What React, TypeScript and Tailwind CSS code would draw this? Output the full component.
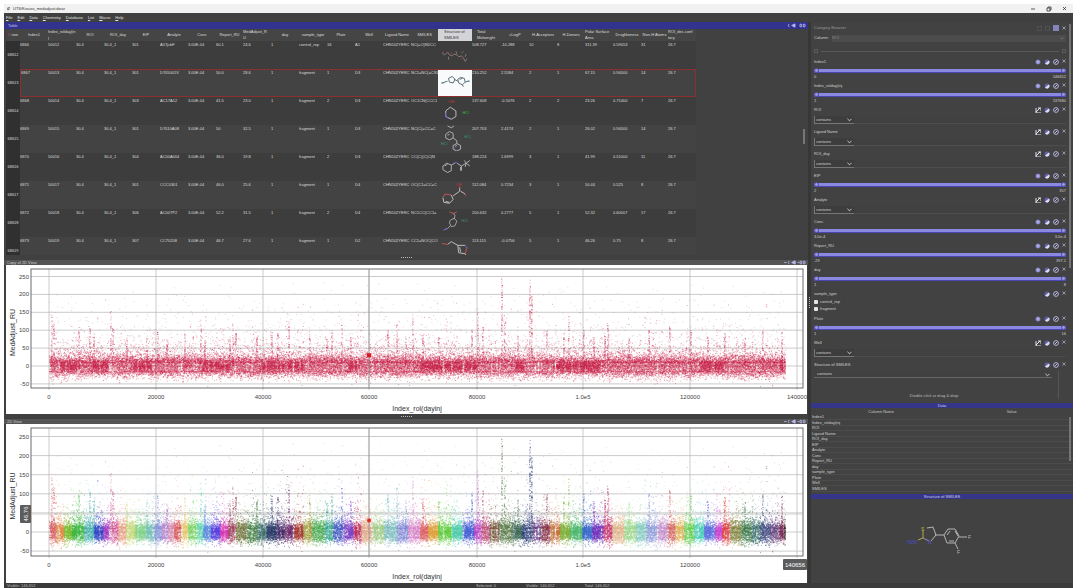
import type { ReactNode } from "react";

type Column = { label: string; width: string; wrap?: string; active?: boolean };

const columns: Column[] = [
  { label: "Index1", width: "w-[28px]" },
  { label: "Index_rolday(inj", width: "w-[28px]", wrap: "break-all" },
  { label: "ROI", width: "w-[28px]" },
  { label: "ROI_day", width: "w-[28px]" },
  { label: "EIP", width: "w-[28px]" },
  { label: "Analyte", width: "w-[28px]" },
  { label: "Conc", width: "w-[28px]" },
  { label: "Report_RU", width: "w-[27px]" },
  { label: "MedAdjust_RU", width: "w-[28px]", wrap: "break-all pr-[3px]" },
  { label: "day", width: "w-[28px]" },
  { label: "sample_type", width: "w-[28px]" },
  { label: "Plate", width: "w-[28px]" },
  { label: "Well", width: "w-[28px]" },
  { label: "Ligand Name", width: "w-[28px]" },
  { label: "SMILES", width: "w-[27px]" },
  { label: "Structure of SMILES", width: "w-[34px]", wrap: "px-[6px]", active: true },
  { label: "Total Molweight", width: "w-[29px]", wrap: "pl-[5px] pr-[2px]" },
  { label: "cLogP", width: "w-[28px]" },
  { label: "H-Acceptors", width: "w-[28px]" },
  { label: "H-Donors", width: "w-[28px]" },
  { label: "Polar Surface Area", width: "w-[28px]", wrap: "pr-px" },
  { label: "Druglikeness", width: "w-[28px]" },
  { label: "Non-H Atoms", width: "w-[27px]" },
  { label: "ROI_dec.conf tory", width: "w-[28px]", wrap: "pr-px" },
];

const rows: string[][] = [
  ["6866", "50012", "30.4", "30.4_1", "301", "A57jcbF", "3.00E-04", "60.1", "24.6", "1", "control_rep", "16", "A1", "CHN102YERC", "NC(=O)N1CC", "508.727", "-10.288", "10", "8", "311.39", "0.59053", "31", "26.7"],
  ["6867", "50013", "30.4", "30.4_1", "301", "D705001V", "3.00E-04", "50.0", "28.6", "1", "fragment", "1", "D3", "CHN102YERC", "NC1=NC(=CS1", "210.252", "2.5584", "2", "1", "67.15", "0.94000", "14", "26.7"],
  ["6868", "50014", "30.4", "30.4_1", "303", "AC17A12", "3.00E-04", "41.5", "23.0", "1", "fragment", "2", "D3", "CHN102YERC", "OC1CN(CCC1", "137.608", "-0.5076", "2", "2", "23.26", "0.71400", "7", "26.7"],
  ["6869", "50015", "30.4", "30.4_1", "301", "D7010A08", "3.00E-04", "50", "32.5", "1", "fragment", "1", "D3", "CHN102YERC", "NC(C(=CC=C", "207.703", "2.4174", "2", "1", "26.02", "0.94000", "14", "26.7"],
  ["6870", "50016", "30.4", "30.4_1", "304", "AC00A004", "3.00E-04", "36.0", "19.8", "1", "fragment", "2", "D3", "CHN102YERC", "CC(C)(C)C(N", "188.224", "1.6999", "3", "1", "41.99", "0.51000", "11", "26.7"],
  ["6871", "50017", "30.4", "30.4_1", "301", "CCC0301", "3.00E-04", "46.0", "25.6", "1", "fragment", "1", "D4", "CHN102YERC", "OC(C1=CC=C", "112.084", "0.7234", "3", "1", "50.44", "0.525", "8", "26.7"],
  ["6872", "50018", "30.4", "30.4_1", "306", "AC007P2", "3.00E-04", "52.2", "31.5", "1", "fragment", "2", "D4", "CHN102YERC", "NC1CC(CC1=", "200.632", "0.2777", "5", "1", "52.32", "0.60007", "17", "26.7"],
  ["6873", "50019", "30.4", "30.4_1", "307", "CC70208", "3.00E-04", "46.7", "27.6", "1", "fragment", "1", "D2", "CHN102YERC", "CC1=NOC(CO", "113.115", "-0.0756", "5", "1", "46.26", "0.75", "8", "26.7"],
];

const structures: ReactNode[] = [
  <g key="0" stroke="#8d7878">
    <path d="M3 13l3 2 3-3 2 3 3 1 2-2 3 1 2 2 3-1 2 2 2 4 2-3M10 17v3M18 11l1 3M24 13l2-2M29 14l-1 3" />
    <path d="M4 11v2M13 12v2M23 18l2 2" stroke="#a04242" />
  </g>,
  <g key="1" stroke="#53676b">
    <path d="M3 14l6-2M10 9l4-2 3 3-2 4-4-1zM16 10l4 2M20 10l3-2 4 1 1 4-3 3-4-2zM28 13l4-1M25 16l1 2M22 10l3-1" />
    <path d="M2 14h3M30 12h3" stroke="#4c8f99" />
  </g>,
  <g key="2">
    <path d="M7 15l5-4 6 4v6l-5 3-6-3z" stroke="#c2c2c2" />
    <path d="M7 17v4l3 2" stroke="#6464cf" />
    <text x="10" y="6" fill="#d33434" stroke="none" fontSize="4">OH</text>
    <text x="25" y="18" fill="#37bf37" stroke="none" fontSize="4">HCl</text>
  </g>,
  <g key="3" stroke="#b6b6b6">
    <path d="M7 10l4-3 4 2v5l-4 2-4-2zM15 14l4 3v3M15 22l4-2 4 2v4l-4 2-4-2zM9 11l2-1M17 23l2-1" />
    <path d="M9 1l4 2 3-2" />
    <path d="M16 24v2" stroke="#6464cf" />
    <text x="27" y="14" fill="#3a9b72" stroke="none" fontSize="4">HCl</text>
    <text x="2" y="21" fill="#3a9b72" stroke="none" fontSize="4">HCl</text>
  </g>,
  <g key="4" stroke="#b6b6b6">
    <path d="M4 14l4-3 5 2v6l-4 2-5-3zM6 14l3-2M13 13l4-2M19 11l5 3 5-3M24 14v5M23 15v4M27 8l2 3 4 3M29 11l4-3M29 11l-1 4" />
    <path d="M15 11l4-1" stroke="#6464cf" />
  </g>,
  <g key="5" stroke="#c6c6c6">
    <path d="M4 18l1 5 6 1 4-4-2-5M7 22l4 1M15 16l7-5M22 11V7M23 11l5 3" />
    <path d="M13 15l-7-1-2 4M26 13l3 3M22 8V6" stroke="#c55555" />
    <text x="18" y="5" fill="#d33434" stroke="none" fontSize="4">OH</text>
  </g>,
  <g key="6" stroke="#a8a8a8">
    <path d="M15 4l2 3-1 4M12 12l4-2 3 3-2 5-4 1-2-4zM12 18l-3 3-3 1" />
    <path d="M11 3l4 2 4-2" stroke="#c55555" />
    <path d="M4 23l5-2" stroke="#6464cf" />
    <text x="24" y="14" fill="#3a9b72" stroke="none" fontSize="4">HCl</text>
  </g>,
  <g key="7" stroke="#c6c6c6">
    <path d="M9 8l4-3 7 4M20 9l8 0M20 9l1 8 7 1M22 11l1 5M28 18l1 2" />
    <path d="M3 7l6 1M30 11l-2 7" stroke="#c55555" />
    <path d="M28 9l2 3" stroke="#6464cf" />
  </g>,
];

type Filter = {
  name: string;
  kind: "range" | "text";
  low?: string;
  high?: string;
};

const filtersTop: Filter[] = [
  { name: "Index1", kind: "range", low: "0", high: "146652" },
  { name: "Index_rolday(inj", kind: "range", low: "1", high: "137680" },
  { name: "ROI", kind: "text" },
  { name: "Ligand Name", kind: "text" },
  { name: "ROI_day", kind: "text" },
  { name: "EIP", kind: "range", low: "2", high: "357" },
  { name: "Analyte", kind: "text" },
  { name: "Conc", kind: "range", low: "3.0e-4", high: "3.0e-4" },
  { name: "Report_RU", kind: "range", low: "-29", high: "397.1" },
  { name: "day", kind: "range", low: "1", high: "8" },
];

const filtersBottom: Filter[] = [
  { name: "Plate", kind: "range", low: "1", high: "16" },
  { name: "Well", kind: "text" },
];

const dataNames = [
  "Index1", "Index_rolday(inj", "ROI", "Ligand Name", "ROI_day", "EIP", "Analyte",
  "Conc", "Report_RU", "day", "sample_type", "Plate", "Well", "SMILES",
];

const menus = ["File", "Edit", "Data", "Chemistry", "Database", "List", "Macro", "Help"];

// Colour stops of the injection series along the x axis
const stops: [number, string][] = [
  [49, "#d8575c"], [56, "#e08c42"], [64, "#76bd2c"], [72, "#38b83e"], [84, "#45b0b0"],
  [94, "#3448c8"], [103, "#a83cc4"], [110, "#d2508f"], [118, "#eaa183"], [126, "#c5d873"],
  [135, "#83d68b"], [145, "#78c3b8"], [153, "#7f93d6"], [161, "#b07fd0"], [168, "#d685ad"],
  [174, "#d84a4a"], [181, "#e6c86a"], [188, "#6fd45c"], [197, "#5ed8b0"], [203, "#5f8de0"],
  [211, "#5a3fe0"], [220, "#d838b5"], [228, "#a0465c"], [236, "#70743a"], [247, "#3f7d3f"],
  [257, "#3d716c"], [266, "#263a66"], [276, "#442a68"], [285, "#6f2a6c"], [294, "#a83c30"],
  [303, "#9c9a35"], [312, "#42a94a"], [324, "#35a68d"], [333, "#3d55c4"], [343, "#7d40c8"],
  [353, "#bf2c5c"], [361, "#dfa27c"], [372, "#9acb80"], [384, "#79bcc0"], [397, "#8289d8"],
  [408, "#d87fc8"], [420, "#e06666"], [428, "#dfa43c"], [438, "#65cf42"], [451, "#4ecfae"],
  [462, "#4760d8"], [474, "#bd46c8"], [481, "#c04a78"], [489, "#735236"], [499, "#557a45"],
  [512, "#3e6c58"], [522, "#293b78"], [532, "#5d3680"], [541, "#872e44"], [550, "#c8743c"],
  [560, "#7fb33a"], [570, "#48b86c"], [582, "#3c69cc"], [592, "#7232c2"], [603, "#c52b67"],
  [612, "#dfb383"], [624, "#98d98b"], [636, "#80cbc0"], [646, "#8a99dc"], [657, "#c38bcd"],
  [667, "#d66262"], [675, "#deb04c"], [684, "#5ed149"], [694, "#47cfbb"], [704, "#5e6ee0"],
  [715, "#cc46cf"], [722, "#dd3a3a"], [730, "#7d8038"], [741, "#397a45"], [751, "#316b68"],
  [760, "#3c477f"], [770, "#63417f"], [779, "#7a2c55"], [784, "#3a1d25"],
];

// [x, top value]: injections whose response climbs well above the band
const peaks: [number, number][] = [
  [51, 150], [53, 120], [78, 110], [89, 105], [93, 85], [110, 155], [112, 110], [126, 80],
  [146, 100], [157, 95], [166, 75], [184, 90], [200, 130], [204, 75], [229, 75], [232, 120],
  [235, 95], [256, 80], [271, 95], [277, 90], [288, 125], [309, 105], [326, 75], [331, 100],
  [341, 115], [350, 80], [387, 100], [396, 120], [405, 85], [412, 150], [422, 85], [438, 80],
  [471, 100], [477, 150], [482, 110], [501, 245], [504, 125], [517, 90], [529, 240],
  [531, 200], [546, 100], [563, 95], [568, 145], [583, 100], [593, 80], [604, 90], [607, 120],
  [628, 75], [648, 100], [669, 115], [690, 100], [707, 85], [724, 90], [744, 80], [762, 100],
  [781, 95],
];

const darkBands = [[60, 78], [92, 107], [133, 150], [202, 228], [262, 275], [278, 302], [348, 358], [420, 475], [515, 522], [553, 600], [700, 722], [779, 784]];

function rng(seed: number) {
  let s = seed;
  return () => {
    s = (s * 1664525 + 1013904223) % 4294967296;
    return s / 4294967296;
  };
}

type Dots = { color: string; opacity: number; d: string };

function scatter(zeroY: number, unit: number, colored: boolean): Dots[] {
  const rand = rng(4711);
  const bell = () => (rand() + rand() + rand() + rand() - 2) * 1.7;
  const out: Dots[] = [];
  for (let i = 0; i < stops.length; i++) {
    const x0 = stops[i][0];
    const x1 = i + 1 < stops.length ? stops[i + 1][0] : x0 + 1;
    // overlapping layers, so that crowded spots come out darker
    const layers = ["", "", "", ""];
    let haze = "";
    let far = "";
    for (let x = x0; x < x1; x++) {
      const dense = darkBands.some(([a, b]) => x >= a && x <= b);
      const gap = rand() < 0.12;
      const n = gap ? 10 : dense ? 56 : 38;
      const spread = dense ? 3.6 : 5;
      for (let k = 0; k < n; k++) {
        const px = (x - 6 + rand()).toFixed(1);
        layers[k % 4] += `M${px} ${(zeroY + 0.5 - bell() * spread).toFixed(1)}h1`;
      }
      const tall = rand() < 0.16 ? 32 : 15;
      for (let k = 0; k < 13; k++) {
        const v = 8 - Math.log(1 - rand() * 0.995) * tall;
        haze += `M${(x - 6 + rand()).toFixed(1)} ${(zeroY - v * unit).toFixed(1)}h1`;
      }
      const drop = rand() < 0.15 ? 16 : 11;
      for (let k = 0; k < 5; k++) {
        haze += `M${(x - 6 + rand()).toFixed(1)} ${(zeroY + 5 + rand() * rand() * drop).toFixed(1)}h1`;
      }
      for (let k = 0; k < 2; k++) {
        const v = 40 + rand() * rand() * 200;
        far += `M${(x - 6 + rand()).toFixed(1)} ${(zeroY - v * unit).toFixed(1)}h1`;
      }
      const peak = peaks.find((p) => p[0] === x);
      if (peak) {
        const count = peak[1] > 180 ? 75 : 36;
        for (let k = 0; k < count; k++) {
          haze += `M${(x - 6 + rand()).toFixed(1)} ${(zeroY - rand() * peak[1] * unit).toFixed(1)}h1`;
        }
      }
    }
    const color = colored ? stops[i][1] : "#c91f45";
    for (const d of layers) out.push({ color, opacity: colored ? 0.42 : 0.3, d });
    out.push({ color, opacity: colored ? 0.5 : 0.4, d: haze });
    out.push({ color: colored ? color : "#8b4a78", opacity: 0.22, d: far });
  }
  return out;
}

const xTicks: [number, string][] = [
  [43, "0"], [150, "20000"], [257, "40000"], [363, "60000"],
  [471, "80000"], [577, "1.0e5"], [684, "120000"], [791, "140000"],
];
const yTicks = [250, 200, 150, 100, 50, 0, -50];

type PlotProps = {
  height: number;
  bottom: number;
  zeroY: number;
  unit: number;
  dots: Dots[];
  colored?: boolean;
};

function Plot({ height, bottom, zeroY, unit, dots, colored }: PlotProps) {
  const markY = zeroY - 30 * unit;
  return (
    <svg
      viewBox={`0 0 801 ${height}`}
      className="block w-full bg-white font-['Liberation_Sans',sans-serif]"
      role="img"
      aria-label="MedAdjust_RU by Index_rol(dayinj"
    >
      <g stroke="#b4b4b4" strokeWidth="0.7">
        {yTicks.map((v) => (
          <path key={v} d={`M25 ${zeroY - v * unit}H797`} />
        ))}
        {xTicks.map(([x]) => (
          <path key={x} d={`M${x} 4V${bottom + 2}`} />
        ))}
      </g>
      {dots.map((p, i) => (
        <path key={i} d={p.d} stroke={p.color} strokeOpacity={p.opacity} fill="none" />
      ))}
      <rect x="25" y="4" width="772" height={bottom - 4} fill="none" stroke="#6b6b6b" />
      <path d={`M363 4V${bottom}`} stroke="#8c8c8c" strokeWidth="0.7" />
      {colored ? (
        <circle cx="363" cy={markY} r="2" fill="#e02a20" />
      ) : (
        <rect x="361" y={markY - 2} width="4" height="4" fill="#e0161e" />
      )}
      <g fontSize="6" fill="#444">
        {yTicks.map((v) => (
          <text key={v} x="23" y={zeroY - v * unit + 2} textAnchor="end">
            {v}
          </text>
        ))}
        {xTicks.map(([x, label]) =>
          colored && label === "140000" ? null : (
            <text key={x} x={x} y={bottom + 11} textAnchor="middle">
              {label}
            </text>
          )
        )}
      </g>
      <g fontSize="7" fill="#333">
        <text x="411" y={bottom + 23} textAnchor="middle">
          Index_rol(dayinj
        </text>
        <text transform={`translate(9 ${bottom / 2 + 6}) rotate(-90)`} textAnchor="middle">
          MedAdjust_RU
        </text>
      </g>
      {colored && (
        <g fontSize="6" fill="#fff">
          <path d={`M25 ${zeroY - 46.76 * unit}H797`} stroke="#c4c4c4" strokeWidth="0.7" />
          <rect x="14" y="81" width="11" height="18" rx="1" fill="#5c5c5c" />
          <text transform="translate(22 90) rotate(-90)" textAnchor="middle">
            46.76
          </text>
          <rect x="777" y="135" width="24" height="11" rx="1" fill="#5c5c5c" />
          <text x="789" y="143" fontSize="6" textAnchor="middle">
            140656
          </text>
        </g>
      )}
    </svg>
  );
}

const redDots = scatter(101, 0.358, false);
const rainbowDots = scatter(108, 0.382, true);

function ViewIcons({ wide }: { wide?: boolean }) {
  return (
    <svg viewBox="0 0 26 6" className="h-[5px] w-[26px]" fill="none" stroke="#b9b7f2" aria-hidden="true">
      {wide && <path d="M0 3h3M13 1v4M16 3h2" />}
      <path d="M6 1l-1 2 1 2" />
      <path d="M9 3l4-2v4z" fill="#b9b7f2" />
      <path d="M19 1.500h2v3h-2zM23 1.500h2v3h-2z" />
    </svg>
  );
}

function ViewTitle({ label }: { label: string }) {
  return (
    <div className="flex h-[5px] shrink-0 items-center justify-between bg-[#555] pl-[3px] text-[4px] text-[#ccc]">
      <span>{label}</span>
      <ViewIcons wide />
    </div>
  );
}

function Splitter() {
  return (
    <div className="flex h-[5px] shrink-0 items-center justify-center gap-px bg-[#404040]">
      {[0, 1, 2, 3, 4, 5].map((i) => (
        <span key={i} className="size-px bg-[#bbb]" />
      ))}
    </div>
  );
}

function CellTable() {
  return (
    <div className="relative min-h-0 flex-1 overflow-hidden bg-[#414141] pl-[2px]">
      <table className="w-[690px] table-fixed border-separate border-spacing-0 text-left text-[4px] leading-[6px] text-[#dcdcdc]">
        <thead>
          <tr className="h-[12px] bg-[#454545]">
            <th className="w-[14px] p-0 text-center font-normal whitespace-nowrap">
              <span className="text-[#ff5a5a]">#</span> row
            </th>
            {columns.map((c) => (
              <th
                key={c.label}
                className={`${c.width} overflow-hidden py-0 align-middle font-normal ${c.wrap ?? "text-center whitespace-nowrap"} ${c.active ? "bg-[#d4d4d8] text-[#333]" : ""}`}
              >
                {c.label}
              </th>
            ))}
          </tr>
        </thead>
        <tbody>
          {rows.map((row, i) => {
            const current = i === 1;
            const edge = current ? "border-y border-[#8c2f2f]" : "";
            return (
              <tr key={row[0]} className={`h-[28px] ${i % 2 ? "bg-[#434343]" : "bg-[#3d3d3d]"}`}>
                <th className="bg-[#303030] p-0 text-center align-middle font-normal">{68612 + i}</th>
                {columns.map((c, k) => {
                  if (c.active) {
                    return (
                      <td key={c.label} className={`p-0 align-top ${edge} ${current ? "bg-[#f8fafc]" : ""}`}>
                        <svg viewBox="0 0 34 28" className="block h-[26px] w-full" fill="none" strokeWidth="1" aria-label="Structure">
                          {structures[i]}
                        </svg>
                      </td>
                    );
                  }
                  return (
                    <td
                      key={c.label}
                      className={`overflow-hidden p-0 align-top whitespace-nowrap ${current ? "" : "pt-px"} ${edge} ${current && k === 0 ? "border-l" : ""} ${current && k === 23 ? "border-r" : ""}`}
                    >
                      {row[k > 15 ? k - 1 : k]}
                    </td>
                  );
                })}
              </tr>
            );
          })}
        </tbody>
      </table>
      {/* scroll thumb */}
      <div className="absolute top-[100px] right-[3px] h-[15px] w-[2px] bg-[#777]" />
    </div>
  );
}

function FilterIcons({ kind }: { kind?: "range" | "text" }) {
  return (
    <div className="flex items-center gap-[3px]">
      {kind && (
        <button className="size-[6px]" aria-label="Options">
          <svg viewBox="0 0 6 6" className="block size-full">
            {kind === "range" ? (
              <>
                <circle cx="3" cy="3" r="2.500" fill="#7775bd" />
                <path d="M3 1v4M1 3h4" stroke="#c7c5ef" strokeWidth="0.8" />
              </>
            ) : (
              <>
                <path d="M1 1v5h5" stroke="#e5e5f5" fill="none" />
                <path d="M1 5l4-4M3 1h3v3" stroke="#e5e5f5" fill="none" />
              </>
            )}
          </svg>
        </button>
      )}
      <button className="size-[6px]" aria-label="Invert">
        <svg viewBox="0 0 6 6" className="block size-full">
          <circle cx="3" cy="3" r="2.500" fill="#625fa8" />
          <path d="M5 1.500a2.500 2.500 0 0 1-4 3z" fill="#dcdcf2" />
        </svg>
      </button>
      <button className="size-[6px]" aria-label="Disable">
        <svg viewBox="0 0 6 6" className="block size-full" fill="none" stroke="#b2b0df">
          <circle cx="3" cy="3" r="2.400" />
          <path d="M1.500 4.500l3-3" />
        </svg>
      </button>
      <button className="size-[4px] self-start" aria-label="Close">
        <svg viewBox="0 0 4 4" className="block size-full" stroke="#a9a9c4">
          <path d="M.5.5l3 3M3.500.500l-3 3" strokeWidth="0.8" />
        </svg>
      </button>
    </div>
  );
}

function Chevron() {
  return (
    <svg viewBox="0 0 6 4" className="pointer-events-none absolute top-[2px] right-[2px] h-[4px] w-[5px]" fill="none" stroke="#e2e2e2" aria-hidden="true">
      <path d="M.5.5L3 3 5.500.500" />
    </svg>
  );
}

const thumb =
  "pointer-events-none absolute inset-0 h-[5px] w-full appearance-none bg-transparent [&::-webkit-slider-thumb]:pointer-events-auto [&::-webkit-slider-thumb]:size-[5px] [&::-webkit-slider-thumb]:appearance-none [&::-webkit-slider-thumb]:rounded-full [&::-webkit-slider-thumb]:border [&::-webkit-slider-thumb]:border-[#4b47b5] [&::-webkit-slider-thumb]:bg-[#9a98d2]";

function FilterRow({ filter }: { filter: Filter }) {
  if (filter.kind === "range") {
    return (
      <section className="h-[24px]">
        <div className="flex h-[8px] items-center justify-between">
          <span>{filter.name}</span>
          <FilterIcons kind="range" />
        </div>
        <div className="relative mt-[2px] flex h-[5px] items-center">
          <div className="h-[4px] w-full border-b border-[#4b47b5] bg-[#8b88e2]" />
          <input type="range" defaultValue={0} aria-label={`${filter.name} minimum`} className={thumb} />
          <input type="range" defaultValue={100} aria-label={`${filter.name} maximum`} className={thumb} />
        </div>
        <div className="flex justify-between pt-px">
          <span>{filter.low}</span>
          <span>{filter.high}</span>
        </div>
      </section>
    );
  }
  return (
    <section className="h-[22px]">
      <div className="flex h-[8px] items-center justify-between">
        <span>{filter.name}</span>
        <FilterIcons kind="text" />
      </div>
      <div className="mt-[2px] flex h-[8px] items-center">
        <div className="relative">
          <select aria-label={`${filter.name} condition`} className="block h-[8px] w-[40px] appearance-none border-b border-l border-[#777] bg-[#3d3d3d] pl-px">
            <option>contains</option>
          </select>
          <Chevron />
        </div>
        <input type="text" aria-label={`${filter.name} text`} className="h-[8px] min-w-0 flex-1 border-b border-[#4d4d4d] bg-[#414141]" />
      </div>
    </section>
  );
}

function FilterPanel() {
  return (
    <div className="relative min-h-0 flex-1 overflow-hidden bg-[#424242] pt-[2px] pr-[7px] pl-[3px] text-[4px] leading-[6px] text-[#d0d0d0]">
      <div className="flex h-[8px] items-center justify-between text-[#999]">
        <span>Category Browser</span>
        <span className="flex items-center gap-[3px]">
          <span className="size-[5px] border border-[#505050]" />
          <span className="size-[5px] border border-[#505050]" />
          <span className="size-[6px] bg-[#8583bd]" />
          <button className="size-[4px]" aria-label="Close browser">
            <svg viewBox="0 0 4 4" className="block size-full" stroke="#a9a9c4">
              <path d="M.5.5l3 3M3.500.500l-3 3" strokeWidth="0.8" />
            </svg>
          </button>
        </span>
      </div>
      <label className="flex h-[12px] items-center gap-[3px]">
        Column:
        <span className="relative flex-1">
          <select className="block h-[7px] w-full appearance-none bg-[#4c4c4c] text-[#888]" disabled>
            <option>ROI</option>
          </select>
          <svg viewBox="0 0 6 4" className="absolute top-[2px] right-[2px] h-[3px] w-[4px]" fill="none" stroke="#888">
            <path d="M.5.5L3 3 5.500.500" />
          </svg>
        </span>
      </label>
      <div className="flex h-[14px] items-center gap-[3px]">
        <button className="size-[4px] border border-[#5c5c5c]" aria-label="Previous" />
        <span className="h-px flex-1 bg-[#595959]" />
        <button className="size-[4px] border border-[#5c5c5c]" aria-label="Next" />
      </div>
      {filtersTop.map((f) => (
        <FilterRow key={f.name} filter={f} />
      ))}
      <section className="h-[25px]">
        <div className="flex h-[8px] items-center justify-between">
          <span>sample_type</span>
          <FilterIcons />
        </div>
        {["control_rep", "fragment"].map((name) => (
          <label key={name} className="flex h-[7px] items-center gap-[2px]">
            <input type="checkbox" defaultChecked className="size-[4px] appearance-none rounded-[1px] checked:bg-[#e4e4e4]" />
            {name}
          </label>
        ))}
      </section>
      {filtersBottom.map((f) => (
        <FilterRow key={f.name} filter={f} />
      ))}
      <section>
        <div className="flex h-[8px] items-center justify-between">
          <span>Structure of SMILES</span>
          <FilterIcons />
        </div>
        <div className="mt-[2px] flex">
          <div className="flex-1">
            <div className="relative">
              <select aria-label="Structure condition" className="block h-[7px] w-full appearance-none border-b border-[#666] bg-[#414141] pl-[3px]">
                <option>contains</option>
              </select>
              <Chevron />
            </div>
            <div className="flex h-[21px] items-end justify-center pl-[2px] text-[#bbb]">
              Double-click or drag &amp; drop
            </div>
          </div>
          <div className="ml-[6px] w-[8px] border-l border-[#555]" />
        </div>
      </section>
      {/* scroll thumb */}
      <div className="absolute top-[2px] right-[2px] h-[244px] w-[2px] bg-[#747474]" />
    </div>
  );
}

function PanelBar({ label }: { label: string }) {
  return (
    <div className="flex h-[5px] shrink-0 items-center justify-center bg-[#35358a] text-[4px] leading-[5px] text-[#d0d0ee]">
      {label}
    </div>
  );
}

function DataPanel() {
  return (
    <div className="relative h-[86px] shrink-0 overflow-hidden bg-[#424242] pl-px">
      <div className="flex h-[7px] items-center justify-around text-[4px] text-[#c8c8c8]" aria-hidden="true">
        <span>Column Name</span>
        <span>Value</span>
      </div>
      <table className="w-full table-fixed border-separate border-spacing-0 text-left text-[4px] leading-[4px] text-[#d0d0d0]">
        <tbody>
          {dataNames.map((name, i) => (
            <tr key={name} className={i % 2 ? "h-[6px]" : "h-[5px]"}>
              <th scope="row" className="border-b border-[#4c4c4c] p-0 font-normal">{name}</th>
              <td className="border-b border-[#4c4c4c] p-0" />
            </tr>
          ))}
        </tbody>
      </table>
      <div className="absolute top-[9px] right-[2px] h-[44px] w-[2px] bg-[#747474]" />
    </div>
  );
}

function StructureView() {
  return (
    <div className="flex h-[84px] shrink-0 justify-center bg-[#424242]">
      <svg viewBox="0 0 262 84" className="h-full w-full" fill="none" stroke="#c2c2c2" strokeWidth="0.9" aria-label="Structure of SMILES">
        <g transform="translate(0 2)">
          <path d="M116 27l6-1 3 8-5 6M124 34h9M133 34l4-6h7l4 7-4 7h-8zM136 34l3-4M144 30l3 5M138 40h5M148 36h8M144 42l3 6" />
          <path d="M112 30v7l-5 2" stroke="#bdb54e" />
          <path d="M112 37l6 3" stroke="#9c9cc8" />
          <g fontSize="5" stroke="none">
            <text x="110" y="30" fill="#c9bf36">S</text>
            <text x="117" y="43" fill="#5d5dde">N</text>
            <text x="96" y="43" fill="#4d4dd4">H2N</text>
            <text x="157" y="38" fill="#b4b4b4">F</text>
            <text x="146" y="53" fill="#b4b4b4">F</text>
          </g>
        </g>
      </svg>
    </div>
  );
}

export default function App() {
  return (
    <div className="flex h-screen flex-col overflow-hidden bg-white pt-[4px] pl-[4px] font-['Liberation_Sans',sans-serif]">
      {/* Title bar */}
      <header className="flex h-[9px] shrink-0 items-center bg-[#f1f1f1] pl-[3px] text-[4px] text-[#333]">
        <svg viewBox="0 0 5 5" className="mr-[2px] size-[4px]" fill="none" stroke="#555" aria-hidden="true">
          <path d="M1 4V1h3M1 3h2" />
        </svg>
        UTS/Krauss_medadjust.dwar
        <svg viewBox="0 0 40 6" className="mr-[4px] ml-auto h-[6px] w-[40px]" fill="none" stroke="#333" strokeWidth="0.8" aria-hidden="true">
          <path d="M2 3h4M18 2h3v3h-3zM19 2V1h3v3h-1M34 1l3 3M37 1l-3 3" />
        </svg>
      </header>

      <div className="flex min-h-0 flex-1 flex-col bg-[#404040]">
        <nav className="flex h-[9px] shrink-0 items-center gap-[5px] pl-[2px] text-[4px] text-[#e0e0e0]">
          {menus.map((m) => (
            <button key={m}>
              <span className="underline">{m[0]}</span>
              {m.slice(1)}
            </button>
          ))}
        </nav>

        <div className="flex min-h-0 flex-1">
          <main className="flex min-w-0 flex-1 flex-col">
            <div className="flex h-[7px] shrink-0 items-center justify-between bg-[#32328f] pl-[4px] text-[4px] text-[#c6c6ef]">
              Table
              <ViewIcons />
            </div>
            <CellTable />
            <Splitter />
            <ViewTitle label="Copy of 2D View" />
            <div className="pr-px pl-[2px]">
              <Plot height={149} bottom={123} zeroY={101} unit={0.358} dots={redDots} />
            </div>
            <Splitter />
            <ViewTitle label="2D View" />
            <div className="pr-px pl-[2px]">
              <Plot height={159} bottom={132} zeroY={108} unit={0.382} dots={rainbowDots} colored />
            </div>
          </main>

          <div className="flex w-[3px] shrink-0 flex-col items-center justify-center gap-px bg-[#373737]">
            {[0, 1, 2, 3, 4, 5].map((i) => (
              <span key={i} className="size-px bg-[#bbb]" />
            ))}
          </div>

          <aside className="flex w-[262px] shrink-0 flex-col">
            <FilterPanel />
            <PanelBar label="Data" />
            <DataPanel />
            <PanelBar label="Structure of SMILES" />
            <StructureView />
          </aside>
        </div>

        <footer className="flex h-[5px] shrink-0 items-center bg-[#3b3b3b] pl-[3px] text-[4px] leading-[5px] text-[#bbb]">
          <span className="flex-1">Visible: 146,652</span>
          <span className="flex w-[597px] gap-[30px]">
            <span>Selected: 0</span>
            <span>Visible: 146,652</span>
            <span>Total: 146,652</span>
          </span>
        </footer>
      </div>
    </div>
  );
}
